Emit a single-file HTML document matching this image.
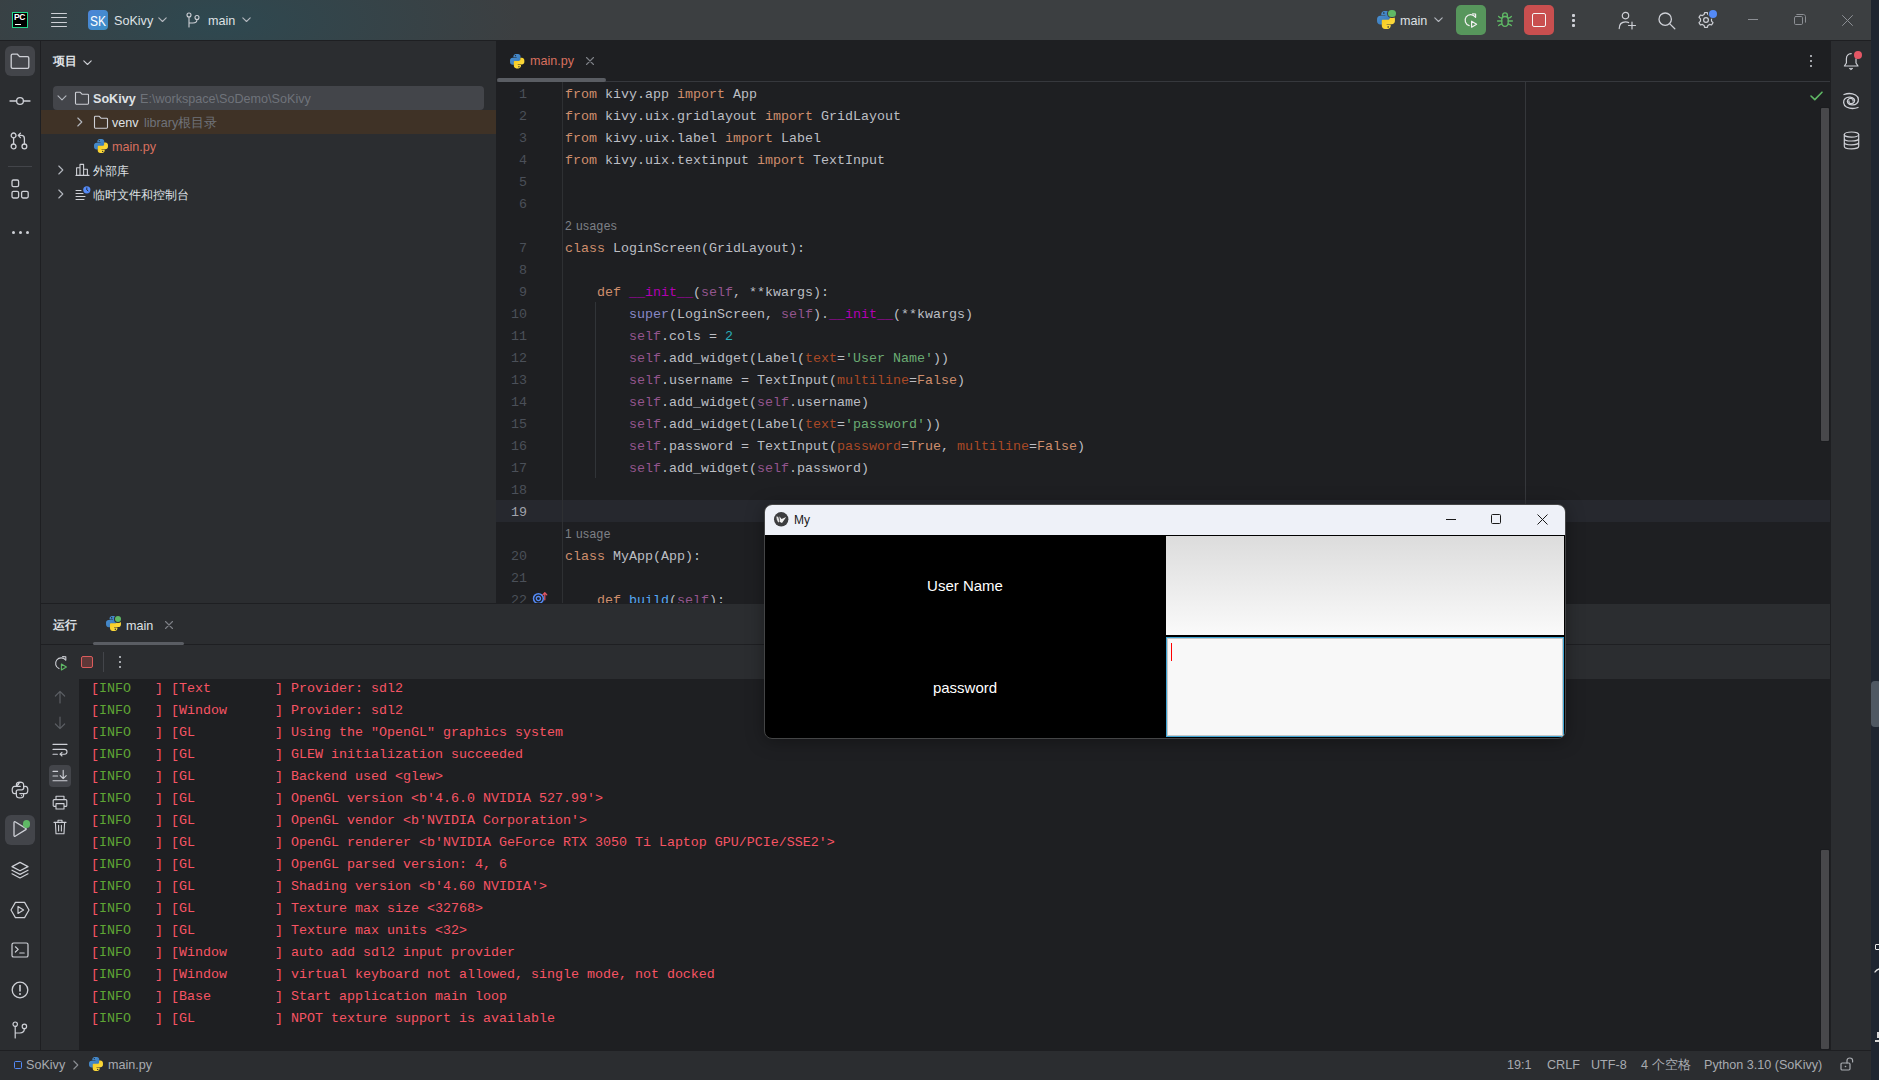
<!DOCTYPE html>
<html><head><meta charset="utf-8"><title>PyCharm</title><style>
*{box-sizing:border-box;margin:0;padding:0}
html,body{width:1879px;height:1080px;overflow:hidden;background:#1E2530}
body{position:relative;font-family:"Liberation Sans",sans-serif;font-size:12.6px;color:#DFE1E5}
.a{position:absolute}
.mono{font-family:"Liberation Mono",monospace;font-size:13.33px;white-space:pre}
svg{position:absolute;overflow:visible}
.ic{fill:none;stroke:#CED0D6;stroke-width:1.2;stroke-linecap:round;stroke-linejoin:round}
</style></head>
<body>
<div class="a" style="left:0;top:0;width:1871px;height:40px;background:#3C3F41"></div>
<div class="a" style="left:0;top:0;width:900px;height:40px;background:radial-gradient(ellipse 300px 110px at 220px 22px,#2E4850 0%,rgba(60,63,65,0) 100%)"></div>
<div class="a" style="left:0;top:40px;width:1871px;height:1px;background:#1E1F22"></div>
<div class="a" style="left:0;top:41px;width:40px;height:1009px;background:#2B2D30"></div>
<div class="a" style="left:40px;top:41px;width:1px;height:1009px;background:#1E1F22"></div>
<div class="a" style="left:41px;top:41px;width:455px;height:562px;background:#2B2D30"></div>
<div class="a" style="left:496px;top:41px;width:1334px;height:562px;background:#1E1F22"></div>
<div class="a" style="left:1830px;top:41px;width:1px;height:1009px;background:#1E1F22"></div>
<div class="a" style="left:1831px;top:41px;width:40px;height:1009px;background:#2B2D30"></div>
<div class="a" style="left:41px;top:603px;width:1789px;height:1px;background:#1E1F22"></div>
<div class="a" style="left:41px;top:604px;width:1789px;height:446px;background:#2B2D30"></div>
<div class="a" style="left:41px;top:644px;width:1789px;height:1px;background:#1E1F22"></div>
<div class="a" style="left:79px;top:679px;width:1751px;height:371px;background:#1E1F22"></div>
<div class="a" style="left:0;top:1050px;width:1871px;height:1px;background:#1E1F22"></div>
<div class="a" style="left:0;top:1051px;width:1871px;height:29px;background:#2B2D30"></div>
<div class="a" style="left:496px;top:41px;width:1334px;height:562px;overflow:hidden">
<div class="a" style="left:0;top:459px;width:1334px;height:22px;background:#26282E"></div>
<div class="a" style="left:66px;top:41px;width:1px;height:600px;background:#2E3033"></div>
<div class="a" style="left:1029px;top:41px;width:1px;height:600px;background:#35373B"></div>
<div class="a" style="left:99px;top:261px;width:1px;height:176px;background:#313438"></div>
<div class="a mono" style="left:0;width:31px;text-align:right;top:43px;line-height:22px;color:#4B5059">1</div>
<div class="a mono" style="left:69px;top:43px;line-height:22px;color:#BCBEC4"><span style="color:#CF8E6D">from</span> kivy.app <span style="color:#CF8E6D">import</span> App</div>
<div class="a mono" style="left:0;width:31px;text-align:right;top:65px;line-height:22px;color:#4B5059">2</div>
<div class="a mono" style="left:69px;top:65px;line-height:22px;color:#BCBEC4"><span style="color:#CF8E6D">from</span> kivy.uix.gridlayout <span style="color:#CF8E6D">import</span> GridLayout</div>
<div class="a mono" style="left:0;width:31px;text-align:right;top:87px;line-height:22px;color:#4B5059">3</div>
<div class="a mono" style="left:69px;top:87px;line-height:22px;color:#BCBEC4"><span style="color:#CF8E6D">from</span> kivy.uix.label <span style="color:#CF8E6D">import</span> Label</div>
<div class="a mono" style="left:0;width:31px;text-align:right;top:109px;line-height:22px;color:#4B5059">4</div>
<div class="a mono" style="left:69px;top:109px;line-height:22px;color:#BCBEC4"><span style="color:#CF8E6D">from</span> kivy.uix.textinput <span style="color:#CF8E6D">import</span> TextInput</div>
<div class="a mono" style="left:0;width:31px;text-align:right;top:131px;line-height:22px;color:#4B5059">5</div>
<div class="a mono" style="left:0;width:31px;text-align:right;top:153px;line-height:22px;color:#4B5059">6</div>
<div class="a" style="left:69px;top:174px;height:22px;line-height:22px;font-size:12px;letter-spacing:0.45px;color:#7E8187">2 usages</div>
<div class="a mono" style="left:0;width:31px;text-align:right;top:197px;line-height:22px;color:#4B5059">7</div>
<div class="a mono" style="left:69px;top:197px;line-height:22px;color:#BCBEC4"><span style="color:#CF8E6D">class</span> LoginScreen(GridLayout):</div>
<div class="a mono" style="left:0;width:31px;text-align:right;top:219px;line-height:22px;color:#4B5059">8</div>
<div class="a mono" style="left:0;width:31px;text-align:right;top:241px;line-height:22px;color:#4B5059">9</div>
<div class="a mono" style="left:69px;top:241px;line-height:22px;color:#BCBEC4">    <span style="color:#CF8E6D">def</span> <span style="color:#B200B2">__init__</span>(<span style="color:#94558D">self</span>, **kwargs):</div>
<div class="a mono" style="left:0;width:31px;text-align:right;top:263px;line-height:22px;color:#4B5059">10</div>
<div class="a mono" style="left:69px;top:263px;line-height:22px;color:#BCBEC4">        <span style="color:#8888C6">super</span>(LoginScreen, <span style="color:#94558D">self</span>).<span style="color:#B200B2">__init__</span>(**kwargs)</div>
<div class="a mono" style="left:0;width:31px;text-align:right;top:285px;line-height:22px;color:#4B5059">11</div>
<div class="a mono" style="left:69px;top:285px;line-height:22px;color:#BCBEC4">        <span style="color:#94558D">self</span>.cols = <span style="color:#2AACB8">2</span></div>
<div class="a mono" style="left:0;width:31px;text-align:right;top:307px;line-height:22px;color:#4B5059">12</div>
<div class="a mono" style="left:69px;top:307px;line-height:22px;color:#BCBEC4">        <span style="color:#94558D">self</span>.add_widget(Label(<span style="color:#AA4926">text</span>=<span style="color:#6AAB73">&#x27;User Name&#x27;</span>))</div>
<div class="a mono" style="left:0;width:31px;text-align:right;top:329px;line-height:22px;color:#4B5059">13</div>
<div class="a mono" style="left:69px;top:329px;line-height:22px;color:#BCBEC4">        <span style="color:#94558D">self</span>.username = TextInput(<span style="color:#AA4926">multiline</span>=<span style="color:#CF8E6D">False</span>)</div>
<div class="a mono" style="left:0;width:31px;text-align:right;top:351px;line-height:22px;color:#4B5059">14</div>
<div class="a mono" style="left:69px;top:351px;line-height:22px;color:#BCBEC4">        <span style="color:#94558D">self</span>.add_widget(<span style="color:#94558D">self</span>.username)</div>
<div class="a mono" style="left:0;width:31px;text-align:right;top:373px;line-height:22px;color:#4B5059">15</div>
<div class="a mono" style="left:69px;top:373px;line-height:22px;color:#BCBEC4">        <span style="color:#94558D">self</span>.add_widget(Label(<span style="color:#AA4926">text</span>=<span style="color:#6AAB73">&#x27;password&#x27;</span>))</div>
<div class="a mono" style="left:0;width:31px;text-align:right;top:395px;line-height:22px;color:#4B5059">16</div>
<div class="a mono" style="left:69px;top:395px;line-height:22px;color:#BCBEC4">        <span style="color:#94558D">self</span>.password = TextInput(<span style="color:#AA4926">password</span>=<span style="color:#CF8E6D">True</span>, <span style="color:#AA4926">multiline</span>=<span style="color:#CF8E6D">False</span>)</div>
<div class="a mono" style="left:0;width:31px;text-align:right;top:417px;line-height:22px;color:#4B5059">17</div>
<div class="a mono" style="left:69px;top:417px;line-height:22px;color:#BCBEC4">        <span style="color:#94558D">self</span>.add_widget(<span style="color:#94558D">self</span>.password)</div>
<div class="a mono" style="left:0;width:31px;text-align:right;top:439px;line-height:22px;color:#4B5059">18</div>
<div class="a mono" style="left:0;width:31px;text-align:right;top:461px;line-height:22px;color:#A1A3AB">19</div>
<div class="a" style="left:69px;top:482px;height:22px;line-height:22px;font-size:12px;letter-spacing:0.45px;color:#7E8187">1 usage</div>
<div class="a mono" style="left:0;width:31px;text-align:right;top:505px;line-height:22px;color:#4B5059">20</div>
<div class="a mono" style="left:69px;top:505px;line-height:22px;color:#BCBEC4"><span style="color:#CF8E6D">class</span> MyApp(App):</div>
<div class="a mono" style="left:0;width:31px;text-align:right;top:527px;line-height:22px;color:#4B5059">21</div>
<div class="a mono" style="left:0;width:31px;text-align:right;top:549px;line-height:22px;color:#4B5059">22</div>
<div class="a mono" style="left:69px;top:549px;line-height:22px;color:#BCBEC4">    <span style="color:#CF8E6D">def</span> <span style="color:#56A8F5">build</span>(<span style="color:#94558D">self</span>):</div>
</div>
<svg style="left:510px;top:53.8px" width="14.4" height="14.4" viewBox="3 2.8 14 14.1"><defs><linearGradient id="pb" x1="0" y1="0" x2="1" y2="1"><stop offset="0" stop-color="#4C94D6"/><stop offset="1" stop-color="#3775B5"/></linearGradient><linearGradient id="py" x1="0" y1="0" x2="1" y2="1"><stop offset="0" stop-color="#FFE24A"/><stop offset="1" stop-color="#F5C518"/></linearGradient></defs><path d="M8.8 2.8H10.8C12.2 2.8 13.3 3.9 13.3 5.3V9.2C13.3 9.6 13 10 12.6 10H8.6C7.7 10 6.9 10.8 6.9 11.7V13.3H5.5C4.1 13.3 3 12.2 3 10.8V9C3 7.6 4.1 6.5 5.5 6.5H9.5V6.1H6.3V5.3C6.3 3.9 7.4 2.8 8.8 2.8Z" fill="url(#pb)"/><path d="M8.8 2.8H10.8C12.2 2.8 13.3 3.9 13.3 5.3V9.2C13.3 9.6 13 10 12.6 10H8.6C7.7 10 6.9 10.8 6.9 11.7V13.3H5.5C4.1 13.3 3 12.2 3 10.8V9C3 7.6 4.1 6.5 5.5 6.5H9.5V6.1H6.3V5.3C6.3 3.9 7.4 2.8 8.8 2.8Z" fill="url(#py)" transform="rotate(180 10 9.85)"/><circle cx="8.3" cy="4.4" r="0.65" fill="#25282C"/><circle cx="11.7" cy="15.3" r="0.65" fill="#25282C"/></svg>
<div class="a" style="left:530px;top:52px;line-height:18px;color:#D8705F">main.py</div>
<svg class="ic" style="left:586px;top:57px" width="8" height="8" viewBox="0 0 8 8"><path d="M0.5 0.5L7.5 7.5M7.5 0.5L0.5 7.5" style="stroke:#7E8187;stroke-width:1.1"/></svg>
<div class="a" style="left:497px;top:81px;width:1333px;height:1px;background:#36383D"></div>
<div class="a" style="left:497px;top:78px;width:109px;height:4px;border-radius:2px;background:#5A5D63"></div>
<div class="a" style="left:1810px;top:55px;width:2.4px;height:2.4px;border-radius:1px;background:#CED0D6"></div>
<div class="a" style="left:1810px;top:60px;width:2.4px;height:2.4px;border-radius:1px;background:#CED0D6"></div>
<div class="a" style="left:1810px;top:65px;width:2.4px;height:2.4px;border-radius:1px;background:#CED0D6"></div>
<svg class="ic" style="left:1810px;top:91px" width="13" height="10" viewBox="0 0 13 10"><path d="M1 5L4.8 8.6L12 1.2" style="stroke:#5FB865;stroke-width:1.6"/></svg>
<div class="a" style="left:1821px;top:108px;width:8px;height:333px;background:#48484B;border-radius:1px;box-shadow:0 0 0 1px #1B1C1F"></div>
<svg style="left:531px;top:590px;overflow:hidden" class="ic" width="18" height="13" viewBox="0 0 18 13"><circle cx="7.4" cy="8.6" r="4.9" style="stroke:#548AF7;stroke-width:1.5"/><circle cx="7.4" cy="8.6" r="2.1" style="stroke:#548AF7;stroke-width:1.3"/><path d="M13.8 9.8V2.8M11.8 4.8L13.8 2.6L15.8 4.8" style="stroke:#E55765;stroke-width:1.2"/></svg>
<div class="a" style="left:53px;top:52px;line-height:18px;font-size:12px;font-weight:bold;color:#DFE1E5">项目</div>
<svg class="ic" style="left:83px;top:59.5px" width="9" height="6" viewBox="0 0 9 6"><path d="M0.8 0.8L4.5 4.5L8.2 0.8" style="stroke:#CED0D6;stroke-width:1.1"/></svg>
<div class="a" style="left:53px;top:86px;width:431px;height:24px;border-radius:4px;background:#43454A"></div>
<div class="a" style="left:41px;top:110px;width:455px;height:24px;background:#3F3226"></div>
<svg class="ic" style="left:57px;top:95px" width="10" height="6" viewBox="0 0 10 6"><path d="M1 0.8L5 4.8L9 0.8" style="stroke:#B4B8BF;stroke-width:1.1"/></svg>
<svg class="ic" style="left:74px;top:91px" width="16" height="14" viewBox="0 0 16 14"><path d="M1.5 2.2c0-.5.4-.9.9-.9h3.9l1.7 1.9h5.6c.5 0 .9.4.9.9v8.2c0 .5-.4.9-.9.9H2.4c-.5 0-.9-.4-.9-.9z" style="stroke:#CED0D6;stroke-width:1.1"/></svg>
<div class="a" style="left:93px;top:90px;line-height:18px;font-weight:bold;color:#DFE1E5">SoKivy</div>
<div class="a" style="left:140px;top:90px;line-height:18px;color:#6F737A">E:\workspace\SoDemo\SoKivy</div>
<svg class="ic" style="left:77px;top:117px" width="6" height="10" viewBox="0 0 6 10"><path d="M0.8 1L4.8 5L0.8 9" style="stroke:#B4B8BF;stroke-width:1.1"/></svg>
<svg class="ic" style="left:93px;top:115px" width="16" height="14" viewBox="0 0 16 14"><path d="M1.5 2.2c0-.5.4-.9.9-.9h3.9l1.7 1.9h5.6c.5 0 .9.4.9.9v8.2c0 .5-.4.9-.9.9H2.4c-.5 0-.9-.4-.9-.9z" style="stroke:#CED0D6;stroke-width:1.1"/></svg>
<div class="a" style="left:112px;top:114px;line-height:18px;color:#DFE1E5">venv</div>
<div class="a" style="left:144px;top:114px;line-height:18px;color:#6F737A">library根目录</div>
<svg style="left:94px;top:139px" width="14" height="14" viewBox="3 2.8 14 14.1"><defs><linearGradient id="pb" x1="0" y1="0" x2="1" y2="1"><stop offset="0" stop-color="#4C94D6"/><stop offset="1" stop-color="#3775B5"/></linearGradient><linearGradient id="py" x1="0" y1="0" x2="1" y2="1"><stop offset="0" stop-color="#FFE24A"/><stop offset="1" stop-color="#F5C518"/></linearGradient></defs><path d="M8.8 2.8H10.8C12.2 2.8 13.3 3.9 13.3 5.3V9.2C13.3 9.6 13 10 12.6 10H8.6C7.7 10 6.9 10.8 6.9 11.7V13.3H5.5C4.1 13.3 3 12.2 3 10.8V9C3 7.6 4.1 6.5 5.5 6.5H9.5V6.1H6.3V5.3C6.3 3.9 7.4 2.8 8.8 2.8Z" fill="url(#pb)"/><path d="M8.8 2.8H10.8C12.2 2.8 13.3 3.9 13.3 5.3V9.2C13.3 9.6 13 10 12.6 10H8.6C7.7 10 6.9 10.8 6.9 11.7V13.3H5.5C4.1 13.3 3 12.2 3 10.8V9C3 7.6 4.1 6.5 5.5 6.5H9.5V6.1H6.3V5.3C6.3 3.9 7.4 2.8 8.8 2.8Z" fill="url(#py)" transform="rotate(180 10 9.85)"/><circle cx="8.3" cy="4.4" r="0.65" fill="#25282C"/><circle cx="11.7" cy="15.3" r="0.65" fill="#25282C"/></svg>
<div class="a" style="left:112px;top:138px;line-height:18px;color:#D8705F">main.py</div>
<svg class="ic" style="left:58px;top:165px" width="6" height="10" viewBox="0 0 6 10"><path d="M0.8 1L4.8 5L0.8 9" style="stroke:#B4B8BF;stroke-width:1.1"/></svg>
<svg class="ic" style="left:75px;top:163px" width="15" height="13" viewBox="0 0 15 13"><path d="M1 12.4H14M1.6 12.4V4.8H5V12.4M5 12.4V1.4H8.6V12.4M8.6 12.4V6.2H12.4V12.4" style="stroke:#CED0D6;stroke-width:1.1"/></svg>
<div class="a" style="left:93px;top:162px;line-height:18px;font-size:12px;color:#DFE1E5">外部库</div>
<svg class="ic" style="left:58px;top:189px" width="6" height="10" viewBox="0 0 6 10"><path d="M0.8 1L4.8 5L0.8 9" style="stroke:#B4B8BF;stroke-width:1.1"/></svg>
<svg class="ic" style="left:75px;top:186px" width="16" height="15" viewBox="0 0 16 15"><path d="M1 4.5H6M1 7.5H8M1 10.5H10M1 13.5H9" style="stroke:#CED0D6;stroke-width:1.1"/><circle cx="11.8" cy="3.8" r="3.6" fill="#548AF7" stroke="none"/><path d="M11.8 1.9V3.9L13 4.8" style="stroke:#1E1F22;stroke-width:0.9"/></svg>
<div class="a" style="left:93px;top:186px;line-height:18px;font-size:12px;color:#DFE1E5">临时文件和控制台</div>
<div class="a" style="left:12px;top:12px;width:16px;height:16px;background:#000;border:1px solid #21D789"></div>
<div class="a" style="left:14px;top:12px;font-size:8.5px;font-weight:bold;line-height:10px;color:#fff;letter-spacing:-0.3px">PC</div>
<div class="a" style="left:15px;top:23.5px;width:6px;height:1.3px;background:#fff"></div>
<div class="a" style="left:51px;top:12.5px;width:16px;height:1.4px;border-radius:1px;background:#CED0D6"></div>
<div class="a" style="left:51px;top:17px;width:16px;height:1.4px;border-radius:1px;background:#CED0D6"></div>
<div class="a" style="left:51px;top:21.5px;width:16px;height:1.4px;border-radius:1px;background:#CED0D6"></div>
<div class="a" style="left:51px;top:26px;width:16px;height:1.4px;border-radius:1px;background:#CED0D6"></div>
<div class="a" style="left:88px;top:10px;width:20px;height:20px;border-radius:4px;background:linear-gradient(135deg,#4D85D9,#3C8FC4)"></div>
<div class="a" style="left:88px;top:10.5px;width:20px;line-height:20px;text-align:center;font-size:15px;color:#fff;transform:scaleX(0.8)">SK</div>
<div class="a" style="left:114px;top:12px;line-height:18px;color:#DFE1E5">SoKivy</div>
<svg class="ic" style="left:158px;top:17px" width="9" height="6" viewBox="0 0 9 6"><path d="M0.8 0.8L4.5 4.5L8.2 0.8" style="stroke:#B4B8BF;stroke-width:1.1"/></svg>
<svg class="ic" style="left:186px;top:12px" width="14" height="16" viewBox="0 0 14 16"><circle cx="3" cy="3" r="2" style="stroke:#CED0D6;stroke-width:1.1"/><circle cx="11" cy="5.5" r="2" style="stroke:#CED0D6;stroke-width:1.1"/><path d="M3 5V15M11 7.5C11 10 9 11 7 11H3" style="stroke:#CED0D6;stroke-width:1.1"/></svg>
<div class="a" style="left:208px;top:12px;line-height:18px;color:#DFE1E5">main</div>
<svg class="ic" style="left:242px;top:17px" width="9" height="6" viewBox="0 0 9 6"><path d="M0.8 0.8L4.5 4.5L8.2 0.8" style="stroke:#B4B8BF;stroke-width:1.1"/></svg>
<svg style="left:1377px;top:10.5px" width="18" height="18" viewBox="3 2.8 14 14.1"><defs><linearGradient id="pb" x1="0" y1="0" x2="1" y2="1"><stop offset="0" stop-color="#4C94D6"/><stop offset="1" stop-color="#3775B5"/></linearGradient><linearGradient id="py" x1="0" y1="0" x2="1" y2="1"><stop offset="0" stop-color="#FFE24A"/><stop offset="1" stop-color="#F5C518"/></linearGradient></defs><path d="M8.8 2.8H10.8C12.2 2.8 13.3 3.9 13.3 5.3V9.2C13.3 9.6 13 10 12.6 10H8.6C7.7 10 6.9 10.8 6.9 11.7V13.3H5.5C4.1 13.3 3 12.2 3 10.8V9C3 7.6 4.1 6.5 5.5 6.5H9.5V6.1H6.3V5.3C6.3 3.9 7.4 2.8 8.8 2.8Z" fill="url(#pb)"/><path d="M8.8 2.8H10.8C12.2 2.8 13.3 3.9 13.3 5.3V9.2C13.3 9.6 13 10 12.6 10H8.6C7.7 10 6.9 10.8 6.9 11.7V13.3H5.5C4.1 13.3 3 12.2 3 10.8V9C3 7.6 4.1 6.5 5.5 6.5H9.5V6.1H6.3V5.3C6.3 3.9 7.4 2.8 8.8 2.8Z" fill="url(#py)" transform="rotate(180 10 9.85)"/><circle cx="8.3" cy="4.4" r="0.65" fill="#25282C"/><circle cx="11.7" cy="15.3" r="0.65" fill="#25282C"/></svg>
<div class="a" style="left:1388.4px;top:9.9px;width:7.2px;height:7.2px;border-radius:50%;background:#5FB865;box-shadow:0 0 0 1px #3C3F41"></div>
<div class="a" style="left:1400px;top:12px;line-height:18px;color:#DFE1E5">main</div>
<svg class="ic" style="left:1434px;top:17px" width="9" height="6" viewBox="0 0 9 6"><path d="M0.8 0.8L4.5 4.5L8.2 0.8" style="stroke:#B4B8BF;stroke-width:1.1"/></svg>
<div class="a" style="left:1456px;top:5px;width:30px;height:30px;border-radius:5px;background:#57965C"></div>
<svg class="ic" style="left:1463px;top:12px" width="16" height="16" viewBox="0 0 16 16"><path d="M12.4 5.2A5.6 5.6 0 1 0 6.2 13.6" style="stroke:#F0F0F0;stroke-width:1.2"/><path d="M9.6 1.8L12.6 2V5.2" style="stroke:#F0F0F0;stroke-width:1.2"/><path d="M8.6 9.2V15.2L13.6 12.2Z" style="stroke:#F0F0F0;stroke-width:1.2"/></svg>
<svg class="ic" style="left:1493px;top:8px" width="24" height="24" viewBox="0 0 24 24"><path d="M9.6 8.4V7.4C9.6 5.8 10.6 4.8 12 4.8S14.4 5.8 14.4 7.4V8.4ZM8.8 11C8.8 9.4 10 8.6 12 8.6S15.2 9.4 15.2 11V14.6C15.2 17 13.8 18.4 12 18.4S8.8 17 8.8 14.6Z" style="stroke:#5FB865;stroke-width:1.3"/><path d="M8.8 10.2C7.4 10 6.2 9.4 5.6 8.4M15.2 10.2C16.6 10 17.8 9.4 18.4 8.4M8.8 13H4.6M15.2 13H19.4M8.8 16C7.4 16.2 6.2 16.8 5.6 17.6M15.2 16C16.6 16.2 17.8 16.8 18.4 17.6" style="stroke:#5FB865;stroke-width:1.3"/></svg>
<div class="a" style="left:1524px;top:5px;width:30px;height:30px;border-radius:5px;background:#C94F4F"></div>
<div class="a" style="left:1532px;top:13px;width:14px;height:14px;border-radius:2px;border:1.4px solid #F5F5F5"></div>
<div class="a" style="left:1572px;top:14px;width:2.5px;height:2.5px;border-radius:1px;background:#CED0D6"></div>
<div class="a" style="left:1572px;top:19px;width:2.5px;height:2.5px;border-radius:1px;background:#CED0D6"></div>
<div class="a" style="left:1572px;top:24px;width:2.5px;height:2.5px;border-radius:1px;background:#CED0D6"></div>
<svg class="ic" style="left:1618px;top:11px" width="19" height="19" viewBox="0 0 19 19"><circle cx="7.5" cy="4.6" r="3.2" style="stroke:#CED0D6;stroke-width:1.2"/><path d="M1.2 17.6C1.2 13 4 10.8 7.5 10.8C8.8 10.8 9.8 11.1 10.6 11.6M14 11V18M10.5 14.5H17.5" style="stroke:#CED0D6;stroke-width:1.2"/></svg>
<svg class="ic" style="left:1658px;top:12px" width="18" height="18" viewBox="0 0 18 18"><circle cx="7.2" cy="7.2" r="6.2" style="stroke:#CED0D6;stroke-width:1.3"/><path d="M11.6 11.6L16.8 16.8" style="stroke:#CED0D6;stroke-width:1.3"/></svg>
<svg class="ic" style="left:1697px;top:11px" width="18" height="18" viewBox="0 0 18 18"><path d="M7.6 1.6H10.4L10.9 3.6L12.6 4.6L14.6 4L16 6.4L14.5 7.9V10.1L16 11.6L14.6 14L12.6 13.4L10.9 14.4L10.4 16.4H7.6L7.1 14.4L5.4 13.4L3.4 14L2 11.6L3.5 10.1V7.9L2 6.4L3.4 4L5.4 4.6L7.1 3.6Z" style="stroke:#CED0D6;stroke-width:1.2"/><circle cx="9" cy="9" r="2.4" style="stroke:#CED0D6;stroke-width:1.2"/></svg>
<div class="a" style="left:1708.5px;top:10px;width:8px;height:8px;border-radius:4px;background:#548AF7;box-shadow:0 0 0 1px #3C3F41"></div>
<div class="a" style="left:1748px;top:19px;width:10px;height:1px;background:#8C8F94"></div>
<svg class="ic" style="left:1794px;top:14px" width="12" height="11" viewBox="0 0 12 11"><rect x="0.5" y="2.5" width="8" height="8" rx="1.2" style="stroke:#8C8F94;stroke-width:1"/><path d="M2.8 0.5H9.4C10.5 0.5 11.5 1.5 11.5 2.6V8.2" style="stroke:#8C8F94;stroke-width:1"/></svg>
<svg class="ic" style="left:1842px;top:15px" width="11" height="11" viewBox="0 0 11 11"><path d="M0.5 0.5L10.5 10.5M10.5 0.5L0.5 10.5" style="stroke:#8C8F94;stroke-width:1"/></svg>
<div class="a" style="left:5px;top:46px;width:30px;height:30px;border-radius:6px;background:#43454A"></div>
<svg class="ic" style="left:10px;top:53px" width="20" height="16" viewBox="0 0 20 16"><path d="M1.2 2.6c0-.8.6-1.4 1.4-1.4h4.8l2.2 2.4h7.8c.8 0 1.4.6 1.4 1.4v9c0 .8-.6 1.4-1.4 1.4H2.6c-.8 0-1.4-.6-1.4-1.4z" style="stroke:#CED0D6;stroke-width:1.3"/></svg>
<svg class="ic" style="left:9px;top:94px" width="22" height="14" viewBox="0 0 22 14"><circle cx="11" cy="7" r="3.4" style="stroke:#CED0D6;stroke-width:1.3"/><path d="M1 7H7.6M14.4 7H21" style="stroke:#CED0D6;stroke-width:1.3"/></svg>
<svg class="ic" style="left:10px;top:132px" width="18" height="18" viewBox="0 0 18 18"><circle cx="3.6" cy="3.4" r="2.4" style="stroke:#CED0D6;stroke-width:1.3"/><circle cx="3.6" cy="14.4" r="2.4" style="stroke:#CED0D6;stroke-width:1.3"/><circle cx="14.4" cy="14.4" r="2.4" style="stroke:#CED0D6;stroke-width:1.3"/><path d="M3.6 5.8V12M14.4 12V6.4C14.4 4.6 13.4 3.4 11.4 3.4H8.6M10.4 1.2L8.2 3.4L10.4 5.6" style="stroke:#CED0D6;stroke-width:1.3"/></svg>
<div class="a" style="left:8px;top:166px;width:24px;height:1px;background:#43454A"></div>
<svg class="ic" style="left:11px;top:179px" width="18" height="21" viewBox="0 0 18 21"><rect x="1" y="1" width="6.6" height="6.6" rx="1.4" style="stroke:#CED0D6;stroke-width:1.3"/><rect x="1" y="12.4" width="6.6" height="6.6" rx="1.4" style="stroke:#CED0D6;stroke-width:1.3"/><rect x="10.6" y="12.4" width="6.6" height="6.6" rx="1.4" style="stroke:#CED0D6;stroke-width:1.3"/></svg>
<div class="a" style="left:11.5px;top:230.5px;width:3px;height:3px;border-radius:2px;background:#CED0D6"></div>
<div class="a" style="left:18.5px;top:230.5px;width:3px;height:3px;border-radius:2px;background:#CED0D6"></div>
<div class="a" style="left:25.5px;top:230.5px;width:3px;height:3px;border-radius:2px;background:#CED0D6"></div>
<svg class="ic" style="left:11px;top:781px" width="18" height="18" viewBox="0 0 18 18"><path d="M9 1.2C6 1.2 5.4 2.4 5.4 3.6V5.4H9.2M5.4 5.4H3.6C2 5.4 1.2 6.8 1.2 9C1.2 11.2 2 12.6 3.6 12.6H5.2V10.8C5.2 9.6 6 8.8 7.2 8.8H10.8C12 8.8 12.6 8 12.6 6.8V3.6C12.6 2.4 12 1.2 9 1.2ZM9 16.8C12 16.8 12.6 15.6 12.6 14.4V12.6H8.8M12.6 12.6H14.4C16 12.6 16.8 11.2 16.8 9C16.8 6.8 16 5.4 14.4 5.4H12.8V7.2M5.4 10.8V14.4C5.4 15.6 6 16.8 9 16.8" style="stroke:#CED0D6;stroke-width:1.2"/><circle cx="7.4" cy="3.4" r=".6" fill="#CED0D6" stroke="none"/><circle cx="10.6" cy="14.6" r=".6" fill="#CED0D6" stroke="none"/></svg>
<div class="a" style="left:5px;top:815px;width:30px;height:30px;border-radius:6px;background:#43454A"></div>
<svg class="ic" style="left:12px;top:820px" width="18" height="18" viewBox="0 0 18 18"><path d="M2 2.4V15.6C2 16.2 2.6 16.5 3.1 16.2L13.8 9.6C14.3 9.3 14.3 8.7 13.8 8.4L3.1 1.8C2.6 1.5 2 1.8 2 2.4Z" style="stroke:#CED0D6;stroke-width:1.3"/></svg>
<div class="a" style="left:22.5px;top:820px;width:7.5px;height:7.5px;border-radius:4px;background:#5FB865"></div>
<svg class="ic" style="left:11px;top:861px" width="18" height="18" viewBox="0 0 18 18"><path d="M9 1.4L17 5.6L9 9.8L1 5.6Z" style="stroke:#CED0D6;stroke-width:1.2"/><path d="M1 9.2L9 13.4L17 9.2M1 12.8L9 17L17 12.8" style="stroke:#CED0D6;stroke-width:1.2"/></svg>
<svg class="ic" style="left:10px;top:901px" width="20" height="18" viewBox="0 0 20 18"><path d="M5.4 1.4H14.6L19 9L14.6 16.6H5.4L1 9Z" style="stroke:#CED0D6;stroke-width:1.2"/><path d="M8 5.6V12.4L13.6 9Z" style="stroke:#CED0D6;stroke-width:1.2"/></svg>
<svg class="ic" style="left:11px;top:942px" width="18" height="16" viewBox="0 0 18 16"><rect x="1" y="1" width="16" height="14" rx="1.6" style="stroke:#CED0D6;stroke-width:1.2"/><path d="M4.4 4.8L7.2 7.4L4.4 10M8.8 11H13.2" style="stroke:#CED0D6;stroke-width:1.2"/></svg>
<svg class="ic" style="left:11px;top:981px" width="18" height="18" viewBox="0 0 18 18"><circle cx="9" cy="9" r="7.8" style="stroke:#CED0D6;stroke-width:1.3"/><path d="M9 4.6V10" style="stroke:#CED0D6;stroke-width:1.6"/><circle cx="9" cy="13" r="1" fill="#CED0D6" stroke="none"/></svg>
<svg class="ic" style="left:12px;top:1021px" width="16" height="18" viewBox="0 0 16 18"><circle cx="3.2" cy="3.2" r="2.2" style="stroke:#CED0D6;stroke-width:1.2"/><circle cx="12.4" cy="5.4" r="2.2" style="stroke:#CED0D6;stroke-width:1.2"/><path d="M3.2 5.4V17M12.4 7.6C12.4 10.4 10.6 12 8 12H3.2" style="stroke:#CED0D6;stroke-width:1.2"/></svg>
<svg class="ic" style="left:1843px;top:51px" width="17" height="20" viewBox="0 0 17 20"><path d="M8.2 2.6C5.2 2.6 3.4 4.8 3.4 7.8V12L1.4 15H15L13 12V7.8" style="stroke:#CED0D6;stroke-width:1.2"/><path d="M6.6 17.4H9.8L8.2 18.6Z" fill="#CED0D6" style="stroke:#CED0D6;stroke-width:0.8"/></svg>
<div class="a" style="left:1853.5px;top:50.5px;width:8px;height:8px;border-radius:4px;background:#E55765"></div>
<svg class="ic" style="left:1843px;top:93px" width="16" height="16" viewBox="0 0 16 16"><path d="M1 1.5C4 0.4 9 0.2 12.5 2C16 4 16.2 8.6 13.8 10.6C11.4 12.6 6.4 12.4 4.8 9.8C3.6 7.8 5.2 5.4 7.6 5.4C9.4 5.4 10.6 6.6 10 8" style="stroke:#CED0D6;stroke-width:1.3"/><path d="M15 14.5C12 15.6 7 15.8 3.5 14C0 12 -0.2 7.4 2.2 5.4C4.6 3.4 9.6 3.6 11.2 6.2C12.4 8.2 10.8 10.6 8.4 10.6C6.6 10.6 5.4 9.4 6 8" style="stroke:#CED0D6;stroke-width:1.3"/></svg>
<svg class="ic" style="left:1843px;top:131px" width="17" height="19" viewBox="0 0 17 19"><ellipse cx="8.5" cy="3.6" rx="7.2" ry="2.6" style="stroke:#CED0D6;stroke-width:1.2"/><path d="M1.3 3.6V15.2C1.3 16.6 4.5 17.8 8.5 17.8S15.7 16.6 15.7 15.2V3.6M1.3 7.4C1.3 8.8 4.5 10 8.5 10S15.7 8.8 15.7 7.4M1.3 11.2C1.3 12.6 4.5 13.8 8.5 13.8S15.7 12.6 15.7 11.2" style="stroke:#CED0D6;stroke-width:1.2"/></svg>
<div class="a" style="left:53px;top:616px;line-height:18px;font-size:12px;font-weight:bold;color:#DFE1E5">运行</div>
<svg style="left:106px;top:616px" width="15" height="15" viewBox="3 2.8 14 14.1"><defs><linearGradient id="pb" x1="0" y1="0" x2="1" y2="1"><stop offset="0" stop-color="#4C94D6"/><stop offset="1" stop-color="#3775B5"/></linearGradient><linearGradient id="py" x1="0" y1="0" x2="1" y2="1"><stop offset="0" stop-color="#FFE24A"/><stop offset="1" stop-color="#F5C518"/></linearGradient></defs><path d="M8.8 2.8H10.8C12.2 2.8 13.3 3.9 13.3 5.3V9.2C13.3 9.6 13 10 12.6 10H8.6C7.7 10 6.9 10.8 6.9 11.7V13.3H5.5C4.1 13.3 3 12.2 3 10.8V9C3 7.6 4.1 6.5 5.5 6.5H9.5V6.1H6.3V5.3C6.3 3.9 7.4 2.8 8.8 2.8Z" fill="url(#pb)"/><path d="M8.8 2.8H10.8C12.2 2.8 13.3 3.9 13.3 5.3V9.2C13.3 9.6 13 10 12.6 10H8.6C7.7 10 6.9 10.8 6.9 11.7V13.3H5.5C4.1 13.3 3 12.2 3 10.8V9C3 7.6 4.1 6.5 5.5 6.5H9.5V6.1H6.3V5.3C6.3 3.9 7.4 2.8 8.8 2.8Z" fill="url(#py)" transform="rotate(180 10 9.85)"/><circle cx="8.3" cy="4.4" r="0.65" fill="#25282C"/><circle cx="11.7" cy="15.3" r="0.65" fill="#25282C"/></svg>
<div class="a" style="left:115px;top:616px;width:6px;height:6px;border-radius:50%;background:#5FB865;box-shadow:0 0 0 1px #2B2D30"></div>
<div class="a" style="left:126px;top:616.5px;line-height:18px;color:#DFE1E5">main</div>
<svg class="ic" style="left:165px;top:621px" width="8" height="8" viewBox="0 0 8 8"><path d="M0.5 0.5L7.5 7.5M7.5 0.5L0.5 7.5" style="stroke:#7E8187;stroke-width:1.1"/></svg>
<div class="a" style="left:93px;top:642px;width:91px;height:3px;border-radius:2px;background:#5A5D63"></div>
<svg class="ic" style="left:53px;top:655px" width="16" height="16" viewBox="0 0 16 16"><path d="M12.6 5A5.6 5.6 0 1 0 6 13.6" style="stroke:#CED0D6;stroke-width:1.1"/><path d="M9.6 1.6L12.8 1.8V5" style="stroke:#CED0D6;stroke-width:1.1"/><path d="M8.4 9V15L13.4 12Z" style="stroke:#5FB865;stroke-width:1.1"/></svg>
<div class="a" style="left:81px;top:656px;width:12px;height:12px;border-radius:2px;border:1.2px solid #DB5C5C;background:#5E3838"></div>
<div class="a" style="left:103px;top:652px;width:1px;height:20px;background:#43454A"></div>
<div class="a" style="left:119px;top:656px;width:2.4px;height:2.4px;border-radius:1px;background:#CED0D6"></div>
<div class="a" style="left:119px;top:661px;width:2.4px;height:2.4px;border-radius:1px;background:#CED0D6"></div>
<div class="a" style="left:119px;top:666px;width:2.4px;height:2.4px;border-radius:1px;background:#CED0D6"></div>
<svg class="ic" style="left:54px;top:690px" width="12" height="14" viewBox="0 0 12 14"><path d="M6 13V1.4M1.4 6L6 1.4L10.6 6" style="stroke:#5B5E63;stroke-width:1.2"/></svg>
<svg class="ic" style="left:54px;top:716px" width="12" height="14" viewBox="0 0 12 14"><path d="M6 1V12.6M1.4 8L6 12.6L10.6 8" style="stroke:#5B5E63;stroke-width:1.2"/></svg>
<svg class="ic" style="left:52px;top:743px" width="16" height="14" viewBox="0 0 16 14"><path d="M1 1.4H15M1 6.4H12.6C14 6.4 15 7.4 15 8.8S14 11.2 12.6 11.2H8M10 9.4L8 11.2L10 13M1 11.2H5.4" style="stroke:#CED0D6;stroke-width:1.1"/></svg>
<div class="a" style="left:49px;top:765px;width:22px;height:22px;border-radius:4px;background:#43454A"></div>
<svg class="ic" style="left:52px;top:769px" width="16" height="14" viewBox="0 0 16 14"><path d="M1 2.4H5.6M1 7H5.6M1 11.8H15M11.2 1.4V9.6M8.2 6.6L11.2 9.6L14.2 6.6" style="stroke:#CED0D6;stroke-width:1.1"/></svg>
<svg class="ic" style="left:52px;top:795px" width="16" height="15" viewBox="0 0 16 15"><path d="M4 4.6V1.2H12V4.6M4 11.4H2.2C1.6 11.4 1.2 11 1.2 10.4V5.6C1.2 5 1.6 4.6 2.2 4.6H13.8C14.4 4.6 14.8 5 14.8 5.6V10.4C14.8 11 14.4 11.4 13.8 11.4H12M4 8.6H12V14H4Z" style="stroke:#CED0D6;stroke-width:1.1"/></svg>
<svg class="ic" style="left:53px;top:819px" width="14" height="16" viewBox="0 0 14 16"><path d="M1 3.4H13M5 3.4V1.2H9V3.4M2.4 3.4L3 14.8H11L11.6 3.4M5.6 6.4V12M8.4 6.4V12" style="stroke:#CED0D6;stroke-width:1.1"/></svg>
<div class="a mono" style="left:91px;top:678px;line-height:22px"><span style="color:#F75464">[</span><span style="color:#5EA535">INFO</span><span style="color:#F75464">   ] [Text        ] Provider: sdl2</span></div>
<div class="a mono" style="left:91px;top:700px;line-height:22px"><span style="color:#F75464">[</span><span style="color:#5EA535">INFO</span><span style="color:#F75464">   ] [Window      ] Provider: sdl2</span></div>
<div class="a mono" style="left:91px;top:722px;line-height:22px"><span style="color:#F75464">[</span><span style="color:#5EA535">INFO</span><span style="color:#F75464">   ] [GL          ] Using the &quot;OpenGL&quot; graphics system</span></div>
<div class="a mono" style="left:91px;top:744px;line-height:22px"><span style="color:#F75464">[</span><span style="color:#5EA535">INFO</span><span style="color:#F75464">   ] [GL          ] GLEW initialization succeeded</span></div>
<div class="a mono" style="left:91px;top:766px;line-height:22px"><span style="color:#F75464">[</span><span style="color:#5EA535">INFO</span><span style="color:#F75464">   ] [GL          ] Backend used &lt;glew&gt;</span></div>
<div class="a mono" style="left:91px;top:788px;line-height:22px"><span style="color:#F75464">[</span><span style="color:#5EA535">INFO</span><span style="color:#F75464">   ] [GL          ] OpenGL version &lt;b&#x27;4.6.0 NVIDIA 527.99&#x27;&gt;</span></div>
<div class="a mono" style="left:91px;top:810px;line-height:22px"><span style="color:#F75464">[</span><span style="color:#5EA535">INFO</span><span style="color:#F75464">   ] [GL          ] OpenGL vendor &lt;b&#x27;NVIDIA Corporation&#x27;&gt;</span></div>
<div class="a mono" style="left:91px;top:832px;line-height:22px"><span style="color:#F75464">[</span><span style="color:#5EA535">INFO</span><span style="color:#F75464">   ] [GL          ] OpenGL renderer &lt;b&#x27;NVIDIA GeForce RTX 3050 Ti Laptop GPU/PCIe/SSE2&#x27;&gt;</span></div>
<div class="a mono" style="left:91px;top:854px;line-height:22px"><span style="color:#F75464">[</span><span style="color:#5EA535">INFO</span><span style="color:#F75464">   ] [GL          ] OpenGL parsed version: 4, 6</span></div>
<div class="a mono" style="left:91px;top:876px;line-height:22px"><span style="color:#F75464">[</span><span style="color:#5EA535">INFO</span><span style="color:#F75464">   ] [GL          ] Shading version &lt;b&#x27;4.60 NVIDIA&#x27;&gt;</span></div>
<div class="a mono" style="left:91px;top:898px;line-height:22px"><span style="color:#F75464">[</span><span style="color:#5EA535">INFO</span><span style="color:#F75464">   ] [GL          ] Texture max size &lt;32768&gt;</span></div>
<div class="a mono" style="left:91px;top:920px;line-height:22px"><span style="color:#F75464">[</span><span style="color:#5EA535">INFO</span><span style="color:#F75464">   ] [GL          ] Texture max units &lt;32&gt;</span></div>
<div class="a mono" style="left:91px;top:942px;line-height:22px"><span style="color:#F75464">[</span><span style="color:#5EA535">INFO</span><span style="color:#F75464">   ] [Window      ] auto add sdl2 input provider</span></div>
<div class="a mono" style="left:91px;top:964px;line-height:22px"><span style="color:#F75464">[</span><span style="color:#5EA535">INFO</span><span style="color:#F75464">   ] [Window      ] virtual keyboard not allowed, single mode, not docked</span></div>
<div class="a mono" style="left:91px;top:986px;line-height:22px"><span style="color:#F75464">[</span><span style="color:#5EA535">INFO</span><span style="color:#F75464">   ] [Base        ] Start application main loop</span></div>
<div class="a mono" style="left:91px;top:1008px;line-height:22px"><span style="color:#F75464">[</span><span style="color:#5EA535">INFO</span><span style="color:#F75464">   ] [GL          ] NPOT texture support is available</span></div>
<div class="a" style="left:1821px;top:850px;width:8px;height:199px;background:#48484B;border-radius:1px;box-shadow:0 0 0 1px #1B1C1F"></div>
<div class="a" style="left:14px;top:1061px;width:8px;height:8px;border:1.3px solid #548AF7;border-radius:1.5px"></div>
<div class="a" style="left:26px;top:1056px;line-height:18px;color:#A8ABB0">SoKivy</div>
<svg class="ic" style="left:73px;top:1060px" width="6" height="10" viewBox="0 0 6 10"><path d="M0.8 1L4.8 5L0.8 9" style="stroke:#8C8F94;stroke-width:1.1"/></svg>
<svg style="left:89px;top:1057px" width="14" height="14" viewBox="3 2.8 14 14.1"><defs><linearGradient id="pb" x1="0" y1="0" x2="1" y2="1"><stop offset="0" stop-color="#4C94D6"/><stop offset="1" stop-color="#3775B5"/></linearGradient><linearGradient id="py" x1="0" y1="0" x2="1" y2="1"><stop offset="0" stop-color="#FFE24A"/><stop offset="1" stop-color="#F5C518"/></linearGradient></defs><path d="M8.8 2.8H10.8C12.2 2.8 13.3 3.9 13.3 5.3V9.2C13.3 9.6 13 10 12.6 10H8.6C7.7 10 6.9 10.8 6.9 11.7V13.3H5.5C4.1 13.3 3 12.2 3 10.8V9C3 7.6 4.1 6.5 5.5 6.5H9.5V6.1H6.3V5.3C6.3 3.9 7.4 2.8 8.8 2.8Z" fill="url(#pb)"/><path d="M8.8 2.8H10.8C12.2 2.8 13.3 3.9 13.3 5.3V9.2C13.3 9.6 13 10 12.6 10H8.6C7.7 10 6.9 10.8 6.9 11.7V13.3H5.5C4.1 13.3 3 12.2 3 10.8V9C3 7.6 4.1 6.5 5.5 6.5H9.5V6.1H6.3V5.3C6.3 3.9 7.4 2.8 8.8 2.8Z" fill="url(#py)" transform="rotate(180 10 9.85)"/><circle cx="8.3" cy="4.4" r="0.65" fill="#25282C"/><circle cx="11.7" cy="15.3" r="0.65" fill="#25282C"/></svg>
<div class="a" style="left:108px;top:1056px;line-height:18px;color:#A8ABB0">main.py</div>
<div class="a" style="left:1507px;top:1056px;line-height:18px;color:#A8ABB0">19:1</div>
<div class="a" style="left:1547px;top:1056px;line-height:18px;color:#A8ABB0">CRLF</div>
<div class="a" style="left:1591px;top:1056px;line-height:18px;color:#A8ABB0">UTF-8</div>
<div class="a" style="left:1641px;top:1056px;line-height:18px;color:#A8ABB0">4 个空格</div>
<div class="a" style="left:1704px;top:1056px;line-height:18px;color:#A8ABB0">Python 3.10 (SoKivy)</div>
<svg class="ic" style="left:1840px;top:1057px" width="14" height="14" viewBox="0 0 14 14"><rect x="1" y="6" width="9" height="7" rx="1.2" style="stroke:#A8ABB0;stroke-width:1.2"/><path d="M7 6V3.6C7 2 8.2 1 9.8 1S12.6 2 12.6 3.6V5" style="stroke:#A8ABB0;stroke-width:1.2"/><circle cx="5.5" cy="9.5" r=".8" fill="#A8ABB0" stroke="none"/></svg>
<div class="a" style="left:1875px;top:944px;width:8px;height:6px;border:1.3px solid #E8E8E8;border-radius:1px"></div>
<svg class="ic" style="left:1874px;top:965px" width="10" height="8" viewBox="0 0 10 8"><path d="M1 7C3 3.6 7 3 10 4.4" style="stroke:#E8E8E8;stroke-width:1.4"/></svg>
<div class="a" style="left:1877px;top:1032px;width:4px;height:6px;background:#D8D8D8"></div>
<div class="a" style="left:1875px;top:1040px;width:6px;height:2px;background:#D8D8D8"></div>
<div class="a" style="left:1871px;top:681px;width:10px;height:46px;border-radius:4px;background:#4F5862"></div>
<div class="a" style="left:764px;top:504px;width:802px;height:235px;border-radius:8px;border:1px solid #444546;box-shadow:0 2px 18px rgba(0,0,0,0.35);background:#000;overflow:hidden">
<div class="a" style="left:0;top:0;width:800px;height:30px;background:#EEF1F8"></div>
<svg style="left:9px;top:6.5px" width="15" height="15" viewBox="0 0 15 15"><circle cx="7.2" cy="7.3" r="7.2" fill="#3C3D3F"/><path d="M2.4 4.4L4.2 4.8L5.6 9.6L4.2 10.4L2.8 7.6Z" fill="#E0E0E0"/><path d="M5.4 4.2L7.6 7L12.2 5L8 11L6 10Z" fill="#F0F0F0"/></svg>
<div class="a" style="left:29px;top:7px;font-family:'Liberation Sans',sans-serif;font-size:12px;line-height:16px;color:#1A1A1A">My</div>
<div class="a" style="left:681px;top:14px;width:10px;height:1px;background:#1A1A1A"></div>
<div class="a" style="left:726px;top:9px;width:10px;height:10px;border:1px solid #1A1A1A;border-radius:1.5px"></div>
<svg style="left:771.5px;top:9px" width="11" height="11" viewBox="0 0 11 11"><path d="M0.5 0.5L10.5 10.5M10.5 0.5L0.5 10.5" stroke="#1A1A1A" stroke-width="1"/></svg>
<div class="a" style="left:401px;top:31px;width:398px;height:99px;background:linear-gradient(#DCDCDC,#FAFAFA)"></div>
<div class="a" style="left:401px;top:132px;width:398px;height:100px;background:#F8F8F8;border:1px solid #3FA6D6;box-shadow:inset 0 0 0 1px #C8C8C8"></div>
<div class="a" style="left:406px;top:138px;width:1px;height:18px;background:#FF0000"></div>
<div class="a" style="left:0;top:72px;width:400px;text-align:center;font-size:15px;line-height:18px;color:#fff">User Name</div>
<div class="a" style="left:0;top:174px;width:400px;text-align:center;font-size:15px;line-height:18px;color:#fff">password</div>
</div>
</body></html>
